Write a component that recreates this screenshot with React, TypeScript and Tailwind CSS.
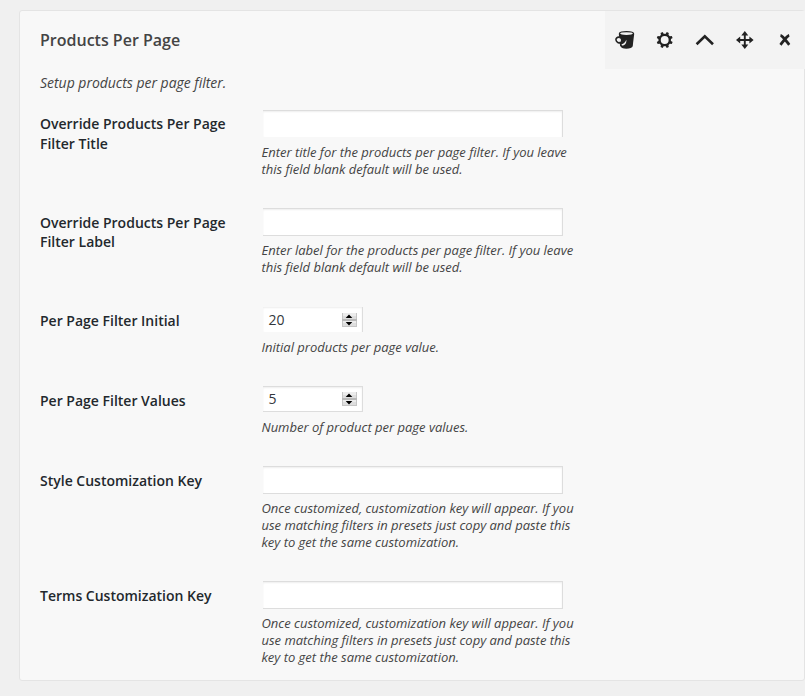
import type { ReactNode } from "react";

type Field = {
  label: string[];
  help: string[];
  value?: string;
  row: string;
  labelPad: string;
  box: string;
};

const keyHelp = [
  "Once customized, customization key will appear. If you",
  "use matching filters in presets just copy and paste this",
  "key to get the same customization.",
];

const fields: Field[] = [
  {
    label: ["Override Products Per Page", "Filter Title"],
    help: ["Enter title for the products per page filter. If you leave", "this field blank default will be used."],
    row: "h-[98px]",
    labelPad: "pt-1 leading-5",
    box: "mb-[7px] h-[27px] w-[300px] border-t border-r",
  },
  {
    label: ["Override Products Per Page", "Filter Label"],
    help: ["Enter label for the products per page filter. If you leave", "this field blank default will be used."],
    row: "h-[99px]",
    labelPad: "pt-[5px] leading-[19px]",
    box: "mb-1.5 h-7 w-[300px] border-y border-r",
  },
  {
    label: ["Per Page Filter Initial"],
    help: ["Initial products per page value."],
    value: "20",
    row: "h-[79px]",
    labelPad: "pt-1 leading-[19.5px]",
    box: "mb-[7px] h-[25px] w-[100px] border-r",
  },
  {
    label: ["Per Page Filter Values"],
    help: ["Number of product per page values."],
    value: "5",
    row: "h-20",
    labelPad: "pt-[5px] leading-[19.5px]",
    box: "mb-[7px] h-[26px] w-[100px] border-y border-r",
  },
  {
    label: ["Style Customization Key"],
    help: keyHelp,
    row: "h-[115px]",
    labelPad: "pt-[5px] leading-[19.5px]",
    box: "mb-1.5 h-7 w-[300px] border-y border-r",
  },
  {
    label: ["Terms Customization Key"],
    help: keyHelp,
    row: "h-[100px]",
    labelPad: "pt-[5px] leading-[19.5px]",
    box: "mb-1.5 h-7 w-[300px] border-y border-r",
  },
];

function Spinner() {
  return (
    <svg width="15" height="14" viewBox="0 0 15 14">
      <path fill="#ececec" d="M0 0h15v14H0z" />
      <path fill="#dedede" d="M1 3h13v3H1zM1 10h13v3H1z" />
      <path fill="#c6c6c6" d="M0 0h1v14H0zM14 0h1v14h-1zM0 13h15v1H0z" />
      <path fill="#b8b8b8" d="M0 6h15v2H0z" />
      <path fill="#000" d="M7 1.500 10.300 5H3.700zM7 12.500 10.300 9H3.700z" />
    </svg>
  );
}

function Tool({ children }: { children: ReactNode }) {
  return (
    <button className="flex h-[58px] w-10 items-center justify-center">
      <svg width="20" height="20" viewBox="0 0 20 20" fill="none" stroke="#222">
        {children}
      </svg>
    </button>
  );
}

const teeth = [22.5, 67.5, 112.5, 157.5, 202.5, 247.5, 292.5, 337.5];

function Toolbar() {
  return (
    <div className="-mr-px flex h-[58px] w-[200px] shrink-0 bg-[#f3f3f3]">
      <Tool>
        <path fill="#222" stroke="none" d="M3.800 3.700 5 15.500c.8 2.200 3 3.300 6.300 3.300 3.500 0 6-.9 6.400-2.500L19.200 3.700z" />
        <ellipse cx="11.500" cy="3.600" rx="7" ry="2" fill="#f3f3f3" strokeWidth="1.300" />
        <path strokeWidth="1.600" d="M4.600 7.200C2 6.800.8 8.300 1 10c.3 2.300 2.800 3.300 5.100 3" />
        <path fill="#f3f3f3" stroke="none" d="M3.900 8.200c1.900-.2 2.600 1.600 1.700 3.600-1 .2-2-.2-2.500-.8zM6.500 14.300c2.400-.6 3.700-2.100 4.800-4.600.5 2.900-1 5.600-4.300 5.900z" />
      </Tool>
      <Tool>
        <circle cx="9.700" cy="10" r="5.100" strokeWidth="2.300" />
        {teeth.map((angle) => (
          <path key={angle} transform={`rotate(${angle} 9.700 10)`} fill="#222" stroke="none" d="M7.900 5.200 8.600 1.900h2.200l.7 3.300z" />
        ))}
      </Tool>
      <Tool>
        <path strokeWidth="2.600" d="M1.600 14.300 9.800 6.400l8.200 7.900" />
      </Tool>
      <Tool>
        <path strokeWidth="1.900" d="M9.800 3v14M3 10h14" />
        <path fill="#222" stroke="none" d="m9.800 1 3.500 4.500h-7zM9.800 19l3.500-4.500h-7zM1 10l4.200-3.500v7zM18.600 10l-4.200-3.500v7z" />
      </Tool>
      <Tool>
        <path strokeWidth="2.800" d="M5.500 5.400c2.300.5 6 6.100 8.700 9.400M14.200 5.400c-2.300.5-6 6.100-8.700 9.400" />
      </Tool>
    </div>
  );
}

export default function App() {
  return (
    <div className="h-[696px] w-[805px] overflow-hidden bg-[#f0f0f0] pt-2.5 pl-[19px] font-['Open_Sans',sans-serif] text-[#444]">
      <section className="h-[671px] w-[786px] rounded-[3px] border border-[#e4e4e4] bg-[#f8f8f8]">
        <header className="flex h-[58px] justify-between pl-5">
          <h3 className="pt-[18px] text-base leading-[22px] font-semibold whitespace-nowrap">Products Per Page</h3>
          <Toolbar />
        </header>
        <p className="h-[41px] pt-1 pl-5 text-sm leading-5 tracking-[-0.02px] italic">Setup products per page filter.</p>
        <div className="pl-5">
          {fields.map((field) => (
            <div key={field.label.join(" ")} className={`flex ${field.row}`}>
              <div className={`w-[222px] shrink-0 text-sm font-semibold whitespace-nowrap text-[#23282d] ${field.labelPad}`}>
                {field.label.map((line) => (
                  <div key={line}>{line}</div>
                ))}
              </div>
              <div>
                <div
                  className={`ml-px flex items-center justify-between border-[#ddd] bg-white pr-[5px] pl-[5.5px] text-sm text-[#32373c] shadow-[inset_0_1px_2px_rgba(0,0,0,0.07)] ${field.box}`}
                >
                  {field.value && (
                    <>
                      <span>{field.value}</span>
                      <Spinner />
                    </>
                  )}
                </div>
                <div className="-ml-[0.5px] text-[13px] leading-[17px] tracking-[-0.01px] whitespace-nowrap italic">
                  {field.help.map((line) => (
                    <div key={line}>{line}</div>
                  ))}
                </div>
              </div>
            </div>
          ))}
        </div>
      </section>
    </div>
  );
}
